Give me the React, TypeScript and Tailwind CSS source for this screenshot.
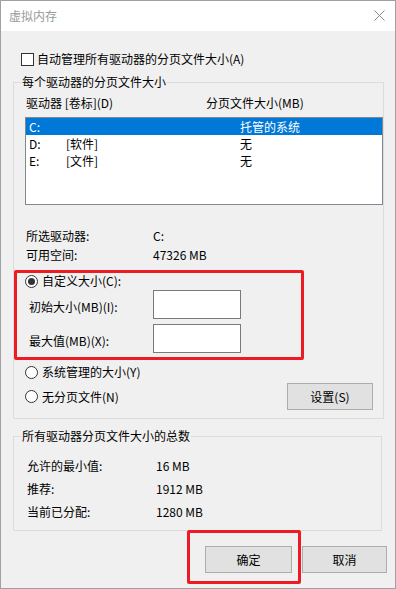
import type { ReactNode } from "react";

type Drive = {
  letter: string;
  label: string;
  size: string;
  selected: boolean;
};

const drives: Drive[] = [
  { letter: "C:", label: "", size: "托管的系统", selected: true },
  { letter: "D:", label: "[软件]", size: "无", selected: false },
  { letter: "E:", label: "[文件]", size: "无", selected: false },
];

const totals = [
  { label: "允许的最小值:", value: "16 MB" },
  { label: "推荐:", value: "1912 MB" },
  { label: "当前已分配:", value: "1280 MB" },
];

function Radio({ checked }: { checked?: boolean }) {
  return (
    <span className="flex h-[13px] w-[13px] shrink-0 items-center justify-center rounded-full border border-[#333333] bg-white">
      {checked && <span className="h-[7px] w-[7px] rounded-full bg-[#333333]" />}
    </span>
  );
}

function WinButton({ children, className = "" }: { children: ReactNode; className?: string }) {
  return (
    <button
      type="button"
      className={`flex h-[27px] items-center justify-center border border-[#adadad] bg-[#e1e1e1] leading-[16px] text-black ${className}`}
    >
      {children}
    </button>
  );
}

function GroupBox({
  title,
  className = "",
  children,
}: {
  title: string;
  className?: string;
  children: ReactNode;
}) {
  return (
    <fieldset className={`ml-[12px] w-[369px] border border-[#dcdcdc] p-0 ${className}`}>
      <legend className="ml-[7px] px-px leading-[16px]">{title}</legend>
      {children}
    </fieldset>
  );
}

export default function App() {
  return (
    <div className="flex h-[589px] w-[396px] flex-col border border-[#a0a0a0] font-['Noto_Sans_CJK_SC','Noto_Sans',sans-serif] text-[12px] text-black">
      <div className="flex h-[30px] shrink-0 items-center justify-between bg-white pl-[8px] pr-[10px]">
        <span className="leading-[16px] text-[#999999]">虚拟内存</span>
        <svg width="11" height="11" viewBox="0 0 11 11" className="-mt-px">
          <path d="M0.5 0.5 L10.5 10.5 M10.5 0.5 L0.5 10.5" stroke="#8a8a8a" strokeWidth="1" fill="none" />
        </svg>
      </div>

      <div className="flex-1 bg-[#f0f0f0] pt-[20px]">
        <div className="flex h-[16px] items-center pl-[20px]">
          <span className="h-[13px] w-[13px] border border-[#333333] bg-white" />
          <span className="ml-[3px] leading-[16px]">自动管理所有驱动器的分页文件大小(A)</span>
        </div>

        <GroupBox title="每个驱动器的分页文件大小" className="mt-[7px] pb-[8px]">
          <div className="mt-[5px] flex pl-[12px] leading-[16px]">
            <span className="w-[180px]">驱动器 [卷标](D)</span>
            <span>分页文件大小(MB)</span>
          </div>

          <div className="ml-[11px] mt-[6px] h-[88px] w-[358px] border border-[#828790] bg-white">
            {drives.map((d) => (
              <div
                key={d.letter}
                className={`flex h-[17px] items-center pl-[3px] leading-[17px] ${
                  d.selected ? "bg-[#0078d7] text-white" : "text-black"
                }`}
              >
                <span className="w-[37px]">{d.letter}</span>
                <span className="w-[174px]">{d.label}</span>
                <span>{d.size}</span>
              </div>
            ))}
          </div>

          <div className="mt-[21px] pl-[12px]">
            <div className="flex h-[19px] items-center">
              <span className="w-[127px]">所选驱动器:</span>
              <span>C:</span>
            </div>
            <div className="flex h-[19px] items-center">
              <span className="w-[127px]">可用空间:</span>
              <span>47326 MB</span>
            </div>
          </div>

          <div className="mt-[6px] w-[290px] rounded-[2px] border-[3px] border-[#ed1c24] pb-[4px]">
            <div className="flex h-[16px] items-center pl-[8px]">
              <Radio checked />
              <span className="ml-[4px] leading-[16px]">自定义大小(C):</span>
            </div>
            <div className="mt-px flex items-start pl-[12px]">
              <span className="mt-[9px] w-[124px] leading-[16px]">初始大小(MB)(I):</span>
              <div className="h-[29px] w-[88px] border border-[#7a7a7a] bg-white" />
            </div>
            <div className="mt-[5px] flex items-start pl-[12px]">
              <span className="mt-[9px] w-[124px] leading-[16px]">最大值(MB)(X):</span>
              <div className="h-[29px] w-[88px] border border-[#7a7a7a] bg-white" />
            </div>
          </div>

          <div className="mt-[4px] flex h-[16px] items-center pl-[11px]">
            <Radio />
            <span className="ml-[4px] leading-[16px]">系统管理的大小(Y)</span>
          </div>

          <div className="mt-[3px] flex h-[27px] items-center pl-[11px]">
            <Radio />
            <span className="ml-[4px] leading-[16px]">无分页文件(N)</span>
            <WinButton className="ml-auto mr-[10px] w-[86px]">设置(S)</WinButton>
          </div>
        </GroupBox>

        <GroupBox title="所有驱动器分页文件大小的总数" className="mt-[9px] pb-[7px]">
          <div className="mt-[10px] pl-[13px]">
            {totals.map((t) => (
              <div key={t.label} className="flex h-[23px] items-center">
                <span className="w-[129px]">{t.label}</span>
                <span>{t.value}</span>
              </div>
            ))}
          </div>
        </GroupBox>

        <div className="-mt-px flex items-start pl-[186px]">
          <div className="h-[54px] w-[114px] rounded-[2px] border-[3px] border-[#ed1c24] pl-[15px] pt-[13px]">
            <WinButton className="w-[87px]">确定</WinButton>
          </div>
          <WinButton className="ml-px mt-[16px] w-[85px]">取消</WinButton>
        </div>
      </div>
    </div>
  );
}
